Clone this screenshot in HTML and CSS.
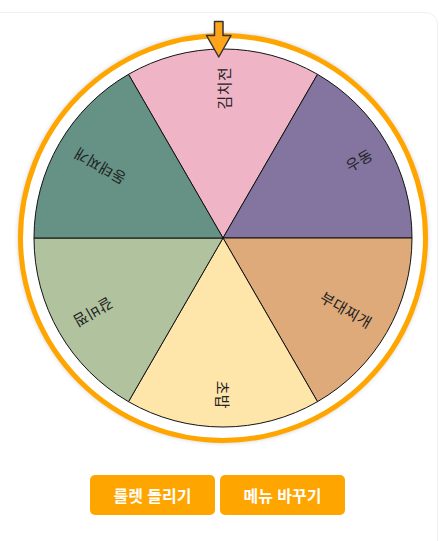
FILE: index.html
```html
<!DOCTYPE html>
<html lang="ko">
<head>
    <meta charset="UTF-8">
    <meta name="viewport" content="width=device-width, initial-scale=1.0">
    <title>오늘 뭐 먹지 룰렛</title>
    <link rel="stylesheet" href="styles.css">
</head>
<body>
    <div class="card">
        <div class="roulette">
            <!-- pointer over the ring -->
            <svg class="pointer" width="30" height="40" viewBox="0 0 30 40">
                <path d="M10.5 1.5 H19 V15.5 H27 L14.75 37 L2.5 15.5 H10.5 Z" fill="#ffa31a" stroke="#333" stroke-width="1.5" stroke-linejoin="round"/>
            </svg>

            <div class="ring">
                <svg class="wheel" width="380" height="380" viewBox="-191 -191 382 382">
                    <g stroke="#111" stroke-width="1">
                        <path d="M0 0 L-95 -164.54 A190 190 0 0 1 95 -164.54 Z" fill="#efb5c7"/>
                        <path d="M0 0 L95 -164.54 A190 190 0 0 1 190 0 Z" fill="#8375a0"/>
                        <path d="M0 0 L190 0 A190 190 0 0 1 95 164.54 Z" fill="#dfaa79"/>
                        <path d="M0 0 L95 164.54 A190 190 0 0 1 -95 164.54 Z" fill="#fee5a9"/>
                        <path d="M0 0 L-95 164.54 A190 190 0 0 1 -190 0 Z" fill="#b1c39e"/>
                        <path d="M0 0 L-190 0 A190 190 0 0 1 -95 -164.54 Z" fill="#659285"/>
                    </g>
                    <g class="labels">
                        <text transform="rotate(-90)" x="172" y="0">김치전</text>
                        <text transform="rotate(-30)" x="172" y="0">우동</text>
                        <text transform="rotate(30)" x="172" y="0">부대찌개</text>
                        <text transform="rotate(90)" x="172" y="0">초밥</text>
                        <text transform="rotate(150)" x="172" y="0">갈비찜</text>
                        <text transform="rotate(210)" x="172" y="0">동태찌개</text>
                    </g>
                </svg>
            </div>
        </div>

        <div class="buttons">
            <button class="btn">룰렛 돌리기</button>
            <button class="btn">메뉴 바꾸기</button>
        </div>
    </div>
</body>
</html>
```

FILE: styles.css
```css
body {
    font-family: "Noto Sans CJK KR", "Noto Sans", sans-serif;
    background-color: #ffffff;
    color: #222;
    margin: 0;
    padding: 0;
    overflow: hidden;
}

.card {
    margin: 12px 1px 0 -30px;
    padding-left: 31px;
    height: 540px;
    border: 1px solid #f0f0f0;
    border-radius: 12px;
    background-color: #fff;
}

.roulette {
    position: relative;
    width: 410px;
    margin: 20px 0 0 16px;
}

.ring {
    width: 400px;
    height: 400px;
    border: 5px solid #ffa500;
    border-radius: 50%;
    background-color: #fff;
    box-shadow: 0 0 4px rgba(0, 0, 0, 0.18);
    display: flex;
    align-items: center;
    justify-content: center;
}

.wheel {
    display: block;
}

.labels text {
    font-size: 15px;
    fill: #222;
    text-anchor: end;
    dominant-baseline: central;
    letter-spacing: 0.5px;
}

.pointer {
    position: absolute;
    top: -13px;
    left: 186px;
    z-index: 2;
}

.buttons {
    display: flex;
    justify-content: center;
    gap: 5px;
    margin-top: 32px;
    margin-right: 4px;
}

.btn {
    width: 125px;
    height: 40px;
    background-color: #ffa500;
    color: white;
    border: none;
    border-radius: 5px;
    font-family: "Noto Sans CJK KR", sans-serif;
    font-size: 16px;
    font-weight: bold;
    cursor: pointer;
}

.btn:hover {
    background-color: #f09400;
}
```
